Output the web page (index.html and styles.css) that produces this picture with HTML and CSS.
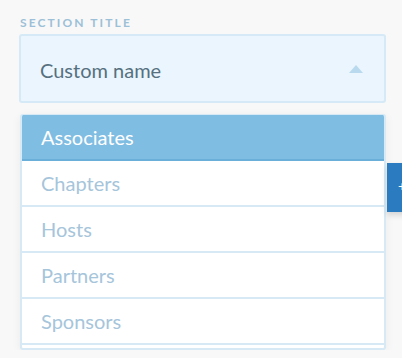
FILE: index.html
```html
<!DOCTYPE html>
<html lang="en">
    <head>
        <meta charset="utf-8">
        <title>Section select</title>
        <link rel="stylesheet" href="styles.css">
    </head>
    <body>
        <div class="field">
            <div class="label">SECTION TITLE</div>
            <div class="select">
                <span>Custom name</span>
                <i class="arrow"></i>
            </div>
            <ul class="menu">
                <li class="active">Associates</li>
                <li>Chapters</li>
                <li>Hosts</li>
                <li>Partners</li>
                <li>Sponsors</li>
                <li></li>
            </ul>
        </div>
        <!-- 右边被挡住的按钮 -->
        <div class="side-btn">+</div>
    </body>
</html>
```

FILE: styles.css
```css
*{
    margin: 0;
    padding: 0;
    box-sizing: border-box;
}
body{
    background-color: #f8f8f8;
    font-family: Lato, "Open Sans", sans-serif;
    overflow: hidden;
}
.field{
    width: 386px;
    padding: 14px 0 0 19px;
}
.label{
    font-size: 12px;
    font-weight: 700;
    letter-spacing: 2.1px;
    color: #9cc0d7;
    line-height: 17px;
    height: 20px;
    padding-left: 1px;
}
.select{
    height: 69px;
    background-color: #eaf5fd;
    border: 2px solid #d5e9f6;
    border-radius: 3px;
    padding: 0 19px;
    display: flex;
    justify-content: space-between;
    align-items: center;
    font-size: 20px;
    color: #56707f;
}
.select>span{
    padding-top: 2px;
}
.arrow{
    width: 0;
    height: 0;
    border-left: 7px solid transparent;
    border-right: 7px solid transparent;
    border-bottom: 8px solid #b9d9ee;
    margin-right: 2px;
}
.menu{
    list-style: none;
    margin: 11px 0 0 1px;
    height: 236px;
    overflow: hidden;
    background-color: #fff;
    border: 2px solid #d6e9f5;
    border-top: 1px solid #d6e9f5;
    border-radius: 3px;
    box-shadow: 0 2px 10px rgba(0,0,0,0.06);
}
.menu>li{
    height: 46px;
    border-bottom: 2px solid #d6e9f5;
    padding-left: 19px;
    display: flex;
    align-items: center;
    font-size: 20px;
    color: #a6c5db;
}
.menu>li.active{
    background-color: #7fbde2;
    border-bottom-color: #6aafd9;
    color: #fff;
}
.side-btn{
    position: absolute;
    left: 387px;
    top: 163px;
    width: 30px;
    height: 49px;
    background-color: #2a7bbf;
    color: #fff;
    font-size: 14px;
    line-height: 46px;
    padding-left: 11px;
    box-shadow: 0 3px 6px rgba(0,0,0,0.15);
}
```
